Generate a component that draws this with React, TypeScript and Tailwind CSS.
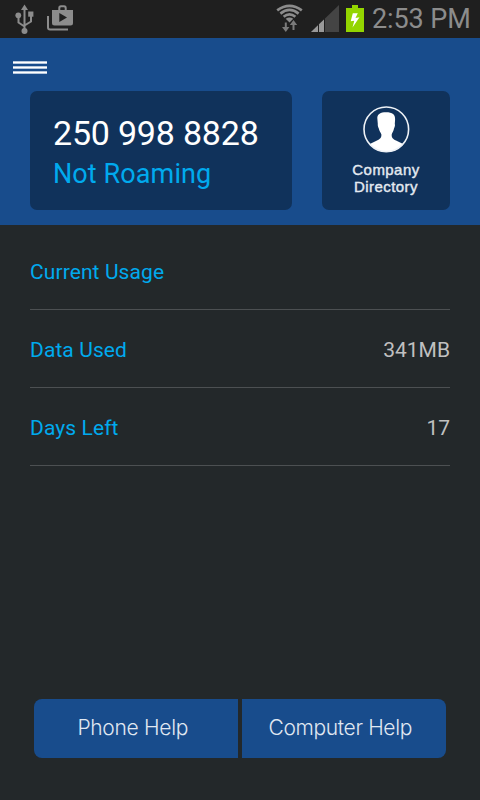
import React from "react";

const roboto = "font-['Roboto','Liberation_Sans',sans-serif]";

function UsbIcon() {
  return (
    <svg className="mt-[4px] h-[31px] w-[20px]" viewBox="0 0 20 31" fill="none" stroke="#8c8c8c" strokeWidth="2">
      <path d="M9.5 5V27M9.5 22.5L3.5 18.5V12M9.5 21.5L16 17.5V11" />
      <path d="M9.5 0.5L13 6H6Z" fill="#8c8c8c" stroke="none" />
      <circle cx="3.3" cy="11.3" r="2.9" fill="#8c8c8c" stroke="none" />
      <rect x="13.2" y="7.5" width="5.2" height="5.2" fill="#8c8c8c" stroke="none" />
      <circle cx="9.5" cy="27" r="3" fill="#8c8c8c" stroke="none" />
    </svg>
  );
}

function StoreIcon() {
  return (
    <svg className="mt-[5px] ml-[12px] h-[26px] w-[26px]" viewBox="0 0 26 26" fill="none">
      <path d="M1 11V22.5Q1 24.5 3 24.5H21" stroke="#8c8c8c" strokeWidth="2" />
      <path d="M12.3 6V3Q12.3 1.3 14 1.3H17Q18.7 1.3 18.7 3V6" stroke="#8c8c8c" strokeWidth="2" />
      <path
        fillRule="evenodd"
        fill="#8c8c8c"
        d="M5 5H26V18Q26 20.5 23.5 20.5H7.5Q5 20.5 5 18ZM12.3 8V17L20 12.5Z"
      />
    </svg>
  );
}

function WifiIcon() {
  return (
    <svg className="mt-[4px] h-[29px] w-[28px]" viewBox="0 0 28 29" fill="none">
      <path
        d="M1.2 6.3Q13.5 -2.7 25.8 6.3M4.4 9.6Q13.5 2.3 22.6 9.6M7.6 12.8Q13.5 8 19.4 12.8"
        stroke="#8c8c8c"
        strokeWidth="2.7"
      />
      <path d="M9.7 14.8Q13.5 12.3 17.3 14.8L13.5 18.6Z" fill="#8c8c8c" />
      <path d="M17.5 15L12.5 21H22.5Z" fill="#1f1f1f" />
      <path d="M9.8 18.5V24M17.5 26V20" stroke="#7a7a7a" strokeWidth="2" />
      <path d="M6 23H13.4L9.8 28ZM13.8 21H21.2L17.5 16Z" fill="#7a7a7a" />
    </svg>
  );
}

function SignalIcon() {
  return (
    <svg className="mt-[5px] ml-[7px] h-[27px] w-[28px]" viewBox="0 0 28 27">
      <path d="M0 27L28 0V27Z" fill="#444444" />
      <path d="M0 27L7 20.3V27Z" fill="#999999" />
      <path d="M7 20.3L8 19.3V27H7ZM13 14.5L14 13.5V27H13Z" fill="#1f1f1f" />
      <path d="M8 27V19.3L13 14.5V27Z" fill="#999999" />
    </svg>
  );
}

function BatteryIcon() {
  return (
    <svg className="mt-[5px] ml-[7px] h-[27px] w-[18px]" viewBox="0 0 18 27">
      <path d="M6 0H12V3H18V27H0V3H6Z" fill="#93d500" />
      <path d="M6.8 8.3H11.8L9.5 13L13.5 12.3L6.5 22.5L8.3 15.8L4.7 16.3Z" fill="#fff" />
    </svg>
  );
}

function PersonIcon() {
  return (
    <svg className="h-[47px] w-[47px]" viewBox="0 0 47 47">
      <path
        fill="#fff"
        d="M14.3 12C14.3 8 17.5 6.2 23 6.2C29.5 6.2 32.4 8.3 32.1 13.5L31.8 18C32.3 19 31.8 21 31 22.5C30.6 25 29.3 26.5 28.7 28.5C28.5 32 30 33 33 34.5L40.2 38C36.5 43 30.5 46 23.5 46C16.5 46 10.5 43 6.8 38L14 34.5C17 33 18.5 32 18.4 28.5C17.7 26.5 16.3 25 15.8 22.5C15 21 14.6 19 14.8 18Z"
      />
      <circle cx="23.3" cy="23.3" r="22.3" fill="none" stroke="#eef2f7" strokeWidth="1.6" />
    </svg>
  );
}

const rows = [
  { label: "Current Usage", value: "" },
  { label: "Data Used", value: "341MB" },
  { label: "Days Left", value: "17" },
];

export default function App() {
  return (
    <div className={`flex h-[800px] w-[480px] flex-col overflow-hidden bg-[#23282a] ${roboto}`}>
      <div className="flex h-[38px] shrink-0 items-start justify-between bg-[#1f1f1f] pr-[10px] pl-[15px]">
        <div className="flex">
          <UsbIcon />
          <StoreIcon />
        </div>
        <div className="flex">
          <WifiIcon />
          <SignalIcon />
          <BatteryIcon />
          <span className="ml-[8px] w-[98px] text-[27px] leading-[38px] tracking-[-0.1px] whitespace-nowrap text-[#8c8c8c]">
            2:53 PM
          </span>
        </div>
      </div>

      <header className="h-[187px] shrink-0 bg-[#184c8c]">
        <button className="ml-[13px] flex h-[53px] flex-col items-start gap-[2px] pt-[23px]" aria-label="Menu">
          <span className="h-[3px] w-[34px] border-y border-[#b4c6dc] bg-white" />
          <span className="h-[3px] w-[34px] border-y border-[#b4c6dc] bg-white" />
          <span className="h-[3px] w-[34px] border-y border-[#b4c6dc] bg-white" />
        </button>
        <div className="flex justify-between px-[30px]">
          <div className="h-[119px] w-[262px] rounded-[7px] bg-[#10325b] pt-[22px] pl-[23px] whitespace-nowrap">
            <div className="text-[34px] leading-[41px] tracking-[-0.2px] text-white">250 998 8828</div>
            <div className="text-[27px] leading-[40px] tracking-[0.1px] text-[#00aaee]">Not Roaming</div>
          </div>
          <div className="flex h-[119px] w-[128px] flex-col items-center rounded-[7px] bg-[#10325b] pt-[15px]">
            <PersonIcon />
            <div className="mt-[8px] text-center font-['Liberation_Sans',sans-serif] text-[15px] leading-[17px] tracking-[0.45px] text-[#e4eaf1] [-webkit-text-stroke:0.4px_#e4eaf1]">
              Company
              <br />
              Directory
            </div>
          </div>
        </div>
      </header>

      <main className="px-[30px] pt-[7px]">
        {rows.map((row) => (
          <div
            key={row.label}
            className="flex h-[78px] items-center justify-between border-b border-[#4c5052] pt-[4px] text-[21px] whitespace-nowrap"
          >
            <span className="tracking-[0.1px] text-[#00aaee]">{row.label}</span>
            <span className="text-[#c0c0c0]">{row.value}</span>
          </div>
        ))}
      </main>

      <footer className="mt-auto mb-[42px] flex gap-[4px] px-[34px] font-['Inter',sans-serif] text-[21px] font-light whitespace-nowrap text-[#e0e8f2]">
        <button className="h-[59px] flex-1 rounded-l-[8px] bg-[#184c8c] pr-[6px] pb-[2px] tracking-[-0.3px]">
          Phone Help
        </button>
        <button className="h-[59px] flex-1 rounded-r-[8px] bg-[#184c8c] pr-[7px] pb-[2px] tracking-[-0.35px]">
          Computer Help
        </button>
      </footer>
    </div>
  );
}
